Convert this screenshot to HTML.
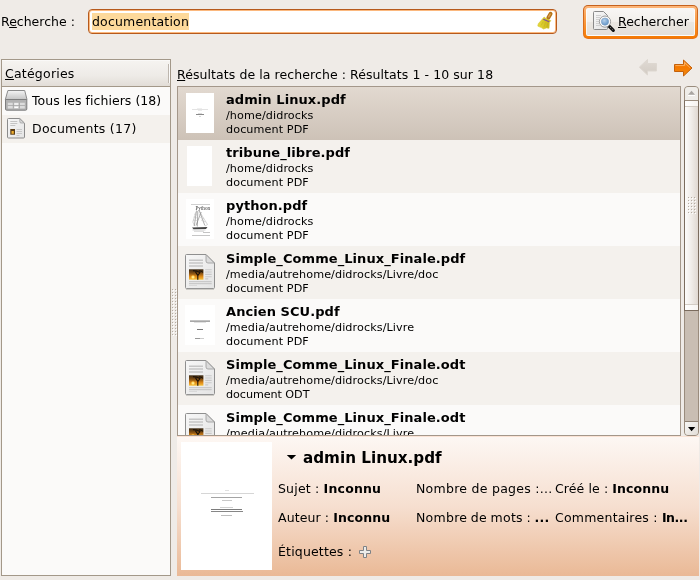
<!DOCTYPE html>
<html><head><meta charset="utf-8">
<style>
html,body{margin:0;padding:0}
body{width:700px;height:580px;background:#efebe7;position:relative;overflow:hidden;font-family:"DejaVu Sans","Liberation Sans",sans-serif;font-size:12.5px;color:#000}
.abs{position:absolute;white-space:nowrap}
.t{position:absolute;white-space:nowrap;line-height:16px;will-change:transform}
.b{font-weight:bold}
.s{font-size:11.2px;line-height:14px;letter-spacing:.09px}
.h{font-size:13px;font-weight:bold;line-height:16px;letter-spacing:.07px}
u{text-decoration:underline;text-underline-offset:0.5px;text-decoration-thickness:1px}
svg{position:absolute;overflow:visible}
#entry{left:88px;top:9px;width:467px;height:23px;border:1px solid #b65a1d;border-radius:4px;background:#fff;box-shadow:inset 0 0 0 1px #fbb87e}
#sel{left:92px;top:13px;width:97px;height:17px;background:#fdd99b}
#btn{left:583px;top:5px;width:115px;height:34px;border-radius:5px;background:linear-gradient(#c4621e,#e8741a)}
#btn i{position:absolute;left:1px;top:1px;right:1px;bottom:1px;border-radius:4px;background:linear-gradient(#fdb67a,#f57900)}
#btn b{position:absolute;left:3px;top:3px;right:3px;bottom:3px;border-radius:2px;border:1px solid rgba(255,255,255,.7);background:linear-gradient(#f8f6f4 0,#f2efeb 48%,#eae6e1 52%,#e4dfd9 100%)}
#left{left:1px;top:59px;width:168px;height:515px;border:1px solid #a39889;background:#fbfaf9}
#lhead{left:2px;top:60px;width:168px;height:26px;background:linear-gradient(#fff 0,#f5f3f0 1px,#eeebe7 60%,#e2ddd7 100%);border-bottom:1px solid #a39889}
.row{position:absolute;left:0;width:502px;height:53px}
.odd{background:#f4f1ed}.even{background:#fbfaf9}
.sel{background:linear-gradient(#e2d9d0,#cdc2b7)}
#list{left:177px;top:86px;width:502px;height:348px;border:1px solid #a4978a;background:#fbfaf9;overflow:hidden}
#detail{left:177px;top:436px;width:522px;height:140px;background:linear-gradient(#fad9c6 0,#fdf7f3 1.5px,#f6dfd0 50%,#eab996 100%)}
.pg{position:absolute;background:#fff}
</style></head><body>
<div class="t" style="left:1px;top:14px">R<u>e</u>cherche :</div>
<div class="abs" id="entry"></div>
<div class="abs" id="sel"></div>
<div class="t" style="left:92px;top:14px;letter-spacing:.18px">documentation</div>
<div class="abs" id="btn"><i></i><b></b></div>
<div class="t" style="left:618px;top:14px"><u>R</u>echercher</div>

<div class="abs" id="left"></div>
<div class="abs" id="lhead"></div>
<div class="abs" style="left:168px;top:64px;width:1px;height:19px;background:#bdb6ae"></div>
<div class="abs" style="left:169px;top:64px;width:1px;height:19px;background:#fbfaf9"></div>
<div class="t" style="left:5px;top:66px;letter-spacing:.22px"><u>C</u>atégories</div>
<div class="abs" style="left:2px;top:87px;width:168px;height:28px;background:#fbfaf9"></div>
<div class="abs" style="left:2px;top:115px;width:168px;height:28px;background:#f4f1ed"></div>
<div class="t" style="left:32px;top:93px;letter-spacing:.04px">Tous les fichiers (18)</div>
<div class="t" style="left:32px;top:121px;letter-spacing:.26px">Documents (17)</div>

<div class="t" style="left:177px;top:67px;letter-spacing:.075px"><u>R</u>ésultats de la recherche : Résultats 1 - 10 sur 18</div>

<div class="abs" id="list">
 <div class="row sel" style="top:0px"><div class="pg" style="left:8px;top:6px;width:28px;height:40px"></div>
  <div class="t h" style="left:48px;top:5px">admin Linux.pdf</div><div class="t s" style="left:48px;top:22px">/home/didrocks</div><div class="t s" style="left:48px;top:36px">document PDF</div></div>
 <div class="row odd" style="top:53px"><div class="pg" style="left:9px;top:6px;width:25px;height:40px"></div>
  <div class="t h" style="left:48px;top:5px">tribune_libre.pdf</div><div class="t s" style="left:48px;top:22px">/home/didrocks</div><div class="t s" style="left:48px;top:36px">document PDF</div></div>
 <div class="row even" style="top:106px"><div class="pg" style="left:8px;top:6px;width:28px;height:40px"></div>
  <div class="t h" style="left:48px;top:5px">python.pdf</div><div class="t s" style="left:48px;top:22px">/home/didrocks</div><div class="t s" style="left:48px;top:36px">document PDF</div></div>
 <div class="row odd" style="top:159px"><svg width="45" height="53" style="left:0;top:0"><use href="#doc32"/></svg>
  <div class="t h" style="left:48px;top:5px">Simple_Comme_Linux_Finale.pdf</div><div class="t s" style="left:48px;top:22px">/media/autrehome/didrocks/Livre/doc</div><div class="t s" style="left:48px;top:36px">document PDF</div></div>
 <div class="row even" style="top:212px"><div class="pg" style="left:7px;top:6px;width:30px;height:40px"></div>
  <div class="t h" style="left:48px;top:5px">Ancien SCU.pdf</div><div class="t s" style="left:48px;top:22px">/media/autrehome/didrocks/Livre</div><div class="t s" style="left:48px;top:36px">document PDF</div></div>
 <div class="row odd" style="top:265px"><svg width="45" height="53" style="left:0;top:0"><use href="#doc32"/></svg>
  <div class="t h" style="left:48px;top:5px">Simple_Comme_Linux_Finale.odt</div><div class="t s" style="left:48px;top:22px">/media/autrehome/didrocks/Livre/doc</div><div class="t s" style="left:48px;top:36px;letter-spacing:-.07px">document ODT</div></div>
 <div class="row even" style="top:318px"><svg width="45" height="53" style="left:0;top:0"><use href="#doc32"/></svg>
  <div class="t h" style="left:48px;top:5px">Simple_Comme_Linux_Finale.odt</div><div class="t s" style="left:48px;top:22px">/media/autrehome/didrocks/Livre</div><div class="t s" style="left:48px;top:36px;letter-spacing:-.07px">document ODT</div></div>
</div>

<div class="abs" id="detail"></div>
<div class="pg" style="left:181px;top:442px;width:91px;height:128px"></div>
<div class="t b" style="left:303px;top:448px;font-size:15.2px;line-height:20px">admin Linux.pdf</div>
<div class="t" style="left:277.500px;top:481px;letter-spacing:.19px">Sujet : <b>Inconnu</b></div>
<div class="t" style="left:278px;top:510px;letter-spacing:.1px">Auteur : <b>Inconnu</b></div>
<div class="t" style="left:278px;top:544px;letter-spacing:.17px">Étiquettes :</div>
<div class="t" style="left:416px;top:481px;letter-spacing:.27px">Nombre de pages :...</div>
<div class="t" style="left:416px;top:510px;letter-spacing:.27px;word-spacing:-.7px">Nombre de mots : <b>...</b></div>
<div class="t" style="left:555px;top:481px;letter-spacing:.1px">Créé le : <b>Inconnu</b></div>
<div class="t" style="left:555px;top:510px;letter-spacing:.22px">Commentaires : <b style="letter-spacing:-.45px">In...</b></div>

<!--SB-->
<div class="abs" style="left:684px;top:86px;width:13px;height:348px;border:1px solid #9a8c7d;border-radius:4px;background:#c9beb3"></div>
<div class="abs" style="left:685px;top:87px;width:13px;height:13px;border-radius:3px 3px 0 0;background:#efede9"></div>
<div class="abs" style="left:684px;top:100px;width:13px;height:209px;border:1px solid #7b6c5e;border-top-color:#9a8c7d;background:linear-gradient(90deg,#fdfcfb,#f0ece8 50%,#e0d8d1)"></div>
<div class="abs" style="left:685px;top:101px;width:13px;height:5px;background:linear-gradient(90deg,#fff,#f6f3f0)"></div>
<div class="abs" style="left:685px;top:305px;width:13px;height:5px;background:linear-gradient(90deg,#fff,#f6f3f0)"></div>
<div class="abs" style="left:685px;top:106px;width:13px;height:1px;background:#d3ccc4"></div>
<div class="abs" style="left:685px;top:304px;width:13px;height:1px;background:#d3ccc4"></div>
<div class="abs" style="left:685px;top:422px;width:13px;height:13px;border-radius:0 0 3px 3px;background:linear-gradient(135deg,#f7f6f4,#e2ddd7)"></div>
<div class="abs" style="left:685px;top:421px;width:13px;height:1px;background:#8d7f70"></div>
<svg width="700" height="580" style="left:0;top:0" viewBox="0 0 700 580">
<path d="M691.500 90.800 L695 94.800 H688Z" fill="#aaa6a2"/><path d="M688 95.500H695" stroke="#fff" stroke-width="1"/>
<path d="M688 427 H695.200 L691.600 431.200Z" fill="#000"/>
<defs><pattern id="dots" width="3" height="3" patternUnits="userSpaceOnUse"><rect width="1" height="1" fill="#b5aca2"/><rect x="1" y="1" width="1" height="1" fill="#fff"/></pattern></defs>
<g transform="translate(688,197)"><rect width="9" height="18" fill="url(#dots)"/></g>
<g transform="translate(172,289)"><rect width="6" height="48" fill="url(#dots)"/></g>
</svg>
<!--/SB-->
<!--ICONS-->
<svg width="700" height="580" style="left:0;top:0;pointer-events:none" viewBox="0 0 700 580">
<defs>
 <linearGradient id="gPage" x1="0" y1="0" x2="1" y2="1"><stop offset="0" stop-color="#f7f7f7"/><stop offset="1" stop-color="#e4e4e4"/></linearGradient>
 <linearGradient id="gImg" x1="0" y1="0" x2="0" y2="1"><stop offset="0" stop-color="#3b2a14"/><stop offset=".35" stop-color="#7a4a12"/><stop offset=".7" stop-color="#e08a18"/><stop offset="1" stop-color="#f6c23c"/></linearGradient>
 <radialGradient id="gSun" cx=".5" cy=".5" r=".5"><stop offset="0" stop-color="#fff6c0"/><stop offset=".5" stop-color="#ffd95a"/><stop offset="1" stop-color="#f0a020" stop-opacity="0"/></radialGradient>
 <linearGradient id="gOr" x1="0" y1="0" x2="0" y2="1"><stop offset="0" stop-color="#fb9a2e"/><stop offset=".45" stop-color="#f57900"/><stop offset="1" stop-color="#f08a10"/></linearGradient>
 <linearGradient id="gGr" x1="0" y1="0" x2="0" y2="1"><stop offset="0" stop-color="#e0dad4"/><stop offset="1" stop-color="#d2cbc3"/></linearGradient>
 <linearGradient id="gDrvT" x1="0" y1="0" x2="0" y2="1"><stop offset="0" stop-color="#f4f4f4"/><stop offset="1" stop-color="#c4c4c4"/></linearGradient>
 <radialGradient id="gLens" cx=".4" cy=".35" r=".7"><stop offset="0" stop-color="#b5d0ea"/><stop offset="1" stop-color="#5b8fc4"/></radialGradient>
 <linearGradient id="gBr" x1="0" y1="0" x2="1" y2="0"><stop offset="0" stop-color="#e6d93a"/><stop offset="1" stop-color="#c4b018"/></linearGradient>
 <g id="doc32">
  <path d="M7.5 9.5 q0-1 1-1 h19.5 l8.5 8.5 v24.5 q0 1-1 1 h-27 q-1 0-1-1z" fill="url(#gPage)" stroke="#8f8f8f" stroke-width="1"/>
  <path d="M8 43.4h28" stroke="#c9c6c2" stroke-width="1"/>
  <path d="M28 8.7 v6.3 q0 2 2 2 h6.3z" fill="#dcdcdc" stroke="#9a9a9a" stroke-width=".8" stroke-linejoin="round"/>
  <path d="M11 14.3h14M11 17.1h14M11 19.9h14" stroke="#c6c6c6" stroke-width="1.5"/>
  <path d="M27.2 23.8h6.5M27.2 26h6.5M27.2 28.4h6.5M27.2 30.7h6.5M27.2 32.9h3" stroke="#c9c9c9" stroke-width="1.1"/>
  <path d="M11 35.6h22.7M11 37.6h22.7" stroke="#c9c9c9" stroke-width="1.1"/><path d="M11 39.4h8" stroke="#d8d8d8" stroke-width="1.1"/>
  <rect x="11" y="23.3" width="14.4" height="10.4" fill="url(#gImg)"/>
  <circle cx="15" cy="31.200" r="2.500" fill="url(#gSun)"/>
  <path d="M19.8 33.7v-4.2l-2.3-3.6M19.8 29.8l2.4-3.8M15 24.6q4 .2 6.5 1.6M21 24.8q2.500 .3 4 1.600" stroke="#1c1208" stroke-width="1.1" fill="none"/>
 </g>
</defs>

<!-- broom -->
<path d="M550.600 13.800 L548.300 17.800" stroke="#b57218" stroke-width="3.900" stroke-linecap="round"/>
<path d="M550.300 14.100 L548.700 16.900" stroke="#dca24e" stroke-width="1.300" stroke-linecap="round"/>
<path d="M544.200 17 L546 18.600 L550.900 20.700 L549.400 22.200 L549 28.300 L546.300 27.900 L543.600 29 L541.300 27.600 L537.800 26.100 L538.300 23.700 Z" fill="url(#gBr)" stroke="#d4c42c" stroke-width=".6" stroke-linejoin="round"/>
<path d="M541 25.500l2-3.500M544 27l1.500-4.500M547 27l.8-4" stroke="#b8a616" stroke-width=".5" opacity=".7"/>
<path d="M543.300 19.300 L549.200 21.700" stroke="#7d4a9e" stroke-width="1.200"/>
<!-- search button icon -->
<path d="M593.5 12.5 q0-1 1-1 h9 l4 4 v13 q0 1-1 1 h-12 q-1 0-1-1z" fill="url(#gPage)" stroke="#8a8a8a"/>
<path d="M596 15.500h5M596 17.500h4M596 19.500h3M596 21.500h3M596 23.500h3M596 25.500h4" stroke="#cfcfcf" stroke-width="1"/>
<path d="M608.800 25.800 L613.300 30.300" stroke="#111" stroke-width="3.200" stroke-linecap="round"/><path d="M610.300 27.300 L613 30" stroke="#ddd" stroke-width="1" stroke-dasharray="1 1.200" opacity=".7"/>
<circle cx="605" cy="21.600" r="5.600" fill="#fff" stroke="#9a9a9a" stroke-width="1"/>
<circle cx="605" cy="21.600" r="3.700" fill="url(#gLens)" stroke="#7c9dbf" stroke-width=".6"/>

<!-- arrows -->
<path d="M639.300 67.200 L647.500 59.500 V63.500 H656.500 V71 H647.500 V75 Z" fill="url(#gGr)" stroke="#ddd7d0" stroke-width="1" stroke-linejoin="round"/>
<path d="M692 68 L683.500 60 V64.500 H674.500 V71.500 H683.500 V76 Z" fill="url(#gOr)" stroke="#c4600a" stroke-width="1" stroke-linejoin="round"/>
<path d="M675.500 65.500 H684.500 V62.500 L690.300 68" fill="none" stroke="#fdbb74" stroke-width=".9" opacity=".8"/>

<!-- drive icon -->
<path d="M7.900 90.500 H24.700 L27 99.500 H5.300 Z" fill="url(#gDrvT)" stroke="#8c8c8c" stroke-width="1" stroke-linejoin="round"/>
<path d="M5.500 99.500 H26.800 V109 q0 1.200-1.200 1.200 H6.700 q-1.200 0-1.200-1.200Z" fill="#b2b2b2" stroke="#7e7e7e" stroke-width="1"/>
<path d="M7.800 103.900H24.800M7.800 107.300H24.800" stroke="#dcdcdc" stroke-width="2.400"/>
<path d="M13.300 102.500V108.600M19.300 102.500V108.600" stroke="#a4a4a4" stroke-width="1"/>
<path d="M14.500 104H18M14.500 107.400H18" stroke="#fff" stroke-width="1.200"/>

<!-- documents icon -->
<path d="M7.500 119.500 q0-1 1-1 h11.300 l4.700 4.700 v13.800 q0 1-1 1 h-15 q-1 0-1-1z" fill="url(#gPage)" stroke="#8b8b8b"/>
<path d="M19.800 118.800 v3 q0 1.200 1.200 1.200 h3.200z" fill="#d8d8d8" stroke="#999" stroke-width=".7"/>
<path d="M10.300 121.500h7M10.300 123.500h7M10.300 125.500h5" stroke="#c4c4c4" stroke-width="1"/>
<path d="M16.500 129.500h5.500M16.500 131.500h5.500M16.500 133.500h5.500M16.500 135.500h3" stroke="#c8c8c8" stroke-width="1"/>
<rect x="10.300" y="129" width="4.700" height="5.700" fill="#5a3c14"/>
<rect x="11.500" y="131" width="2.300" height="2.800" fill="#f0b030"/>


<!-- thumbnails content -->
<g shape-rendering="crispEdges">
<rect x="192" y="109" width="16" height="1" fill="#e3e3e3"/><rect x="197" y="108" width="5" height="1" fill="#efefef"/><rect x="198" y="110" width="4" height="1" fill="#ececec"/>
<rect x="196" y="114" width="8" height="1" fill="#8a8a8a"/><rect x="198" y="113" width="4" height="1" fill="#dcdcdc"/><rect x="199" y="116" width="2" height="1" fill="#d8d8d8"/>
<rect x="190" y="320" width="20" height="1" fill="#c4c4c4"/><rect x="190" y="321" width="20" height="1" fill="#a8a8a8"/><rect x="194" y="322" width="12" height="1" fill="#e2e2e2"/>
<rect x="197" y="329" width="6" height="1" fill="#777"/>
<rect x="195" y="338" width="5" height="1" fill="#999"/><rect x="200" y="338" width="4" height="1" fill="#ccc"/>
<rect x="225" y="490" width="4" height="1" fill="#e0e0e0"/>
<rect x="201" y="493" width="53" height="1" fill="#d6d6d6"/>
<rect x="211" y="497" width="31" height="1" fill="#a4a4a4"/>
<rect x="222" y="500" width="10" height="1" fill="#c8c8c8"/>
<rect x="220" y="507" width="13" height="1" fill="#d0d0d0"/>
<rect x="211" y="509" width="31" height="1" fill="#7c7c7c"/>
<rect x="211" y="511" width="32" height="1" fill="#868686"/>
<rect x="221" y="515" width="11" height="1" fill="#bdbdbd"/>
<rect x="191" y="204" width="19" height="1" fill="#d0d0d0"/>
<rect x="203" y="232" width="7" height="1" fill="#c4c4c4"/><rect x="192" y="235" width="18" height="1" fill="#c6c6c6"/>
</g>
<text x="195.500" y="209.600" font-family="Liberation Serif, serif" font-size="6.300" fill="#333" textLength="14.500" lengthAdjust="spacingAndGlyphs">Python</text>
<g fill="none" stroke="#555" stroke-width=".6" opacity=".8">
<path d="M196.500 210.500 L194.300 226M199.300 210.500 L204.800 225.500M197.800 211 L197.300 226.500M201.200 212 L196 225.500"/>
<path d="M196 212 L192.800 222 L194.500 226M199.500 211.500 L207.500 224.500 L205 226" stroke="#999" stroke-width=".5"/>
<path d="M194 214l3 1M193.500 217l4 1M193 220l5 .8M199 214l3 2M200 217l4 2M201 220l4.500 2" stroke="#aaa" stroke-width=".5"/>
</g>
<path d="M192 227.600 L207.500 227 L206 229 L193.500 229.200 Z" fill="#444"/>
<path d="M192.500 230h13M194 231.300h10" stroke="#bbb" stroke-width=".6"/>
<!-- expander + plus -->
<path d="M286.800 455 H296.200 L291.500 459.500 Z" fill="#000"/>
<path d="M363.500 546.500h3v4h4v3h-4v4h-3v-4h-4v-3h4z" fill="#ececea" stroke="#7e8286" stroke-width="1"/>
</svg>
<!--/ICONS-->
</body></html>
